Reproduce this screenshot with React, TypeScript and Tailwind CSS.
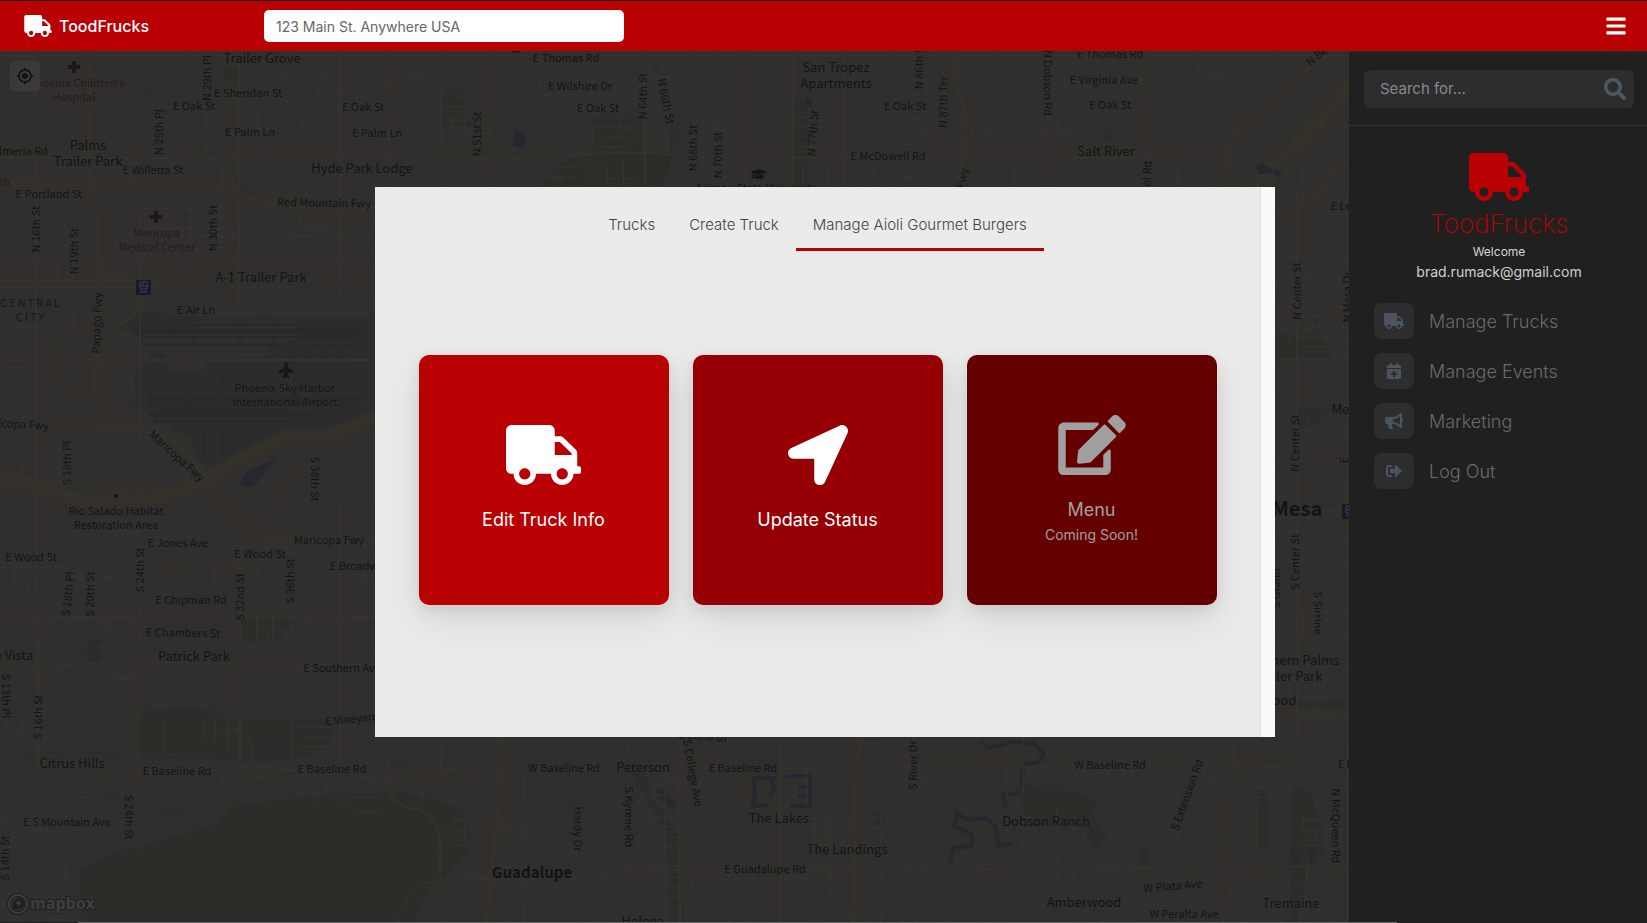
import React from "react";
import {
  FaBars,
  FaBullhorn,
  FaCalendarPlus,
  FaEdit,
  FaGraduationCap,
  FaLocationArrow,
  FaPlane,
  FaSearch,
  FaSignOutAlt,
  FaTruck,
} from "react-icons/fa";
import { MdMyLocation } from "react-icons/md";

type Kind = "road" | "place" | "poi" | "health" | "town" | "city" | "district";
type Label = [string, number, number, number, Kind];

const labelClass: Record<Kind, string> = {
  road: "text-[11px] fill-[#131312]",
  place: "text-[13px] fill-[#131312]",
  poi: "text-[11px] fill-[#131313]",
  health: "text-[11px] fill-[#2b1818]",
  town: "text-[15px] font-bold fill-[#131312]",
  city: "text-[20px] font-bold fill-[#131312]",
  district: "text-[11px] tracking-[2px] fill-[#171615]",
};

// text, centre x, centre y, rotation, kind
const labels: Label[] = [
  ["Trailer Grove", 262, 58, 0, "place"],
  ["Phoenix Children's", 77, 83, 0, "health"],
  ["Hospital", 74, 97, 0, "health"],
  ["N 29th Pl", 207, 78, -90, "road"],
  ["E Sheridan St", 248, 93, 0, "road"],
  ["E Oak St", 194, 106, 0, "road"],
  ["E Oak St", 363, 107, 0, "road"],
  ["N 25th Pl", 159, 132, -90, "road"],
  ["E Palm Ln", 250, 132, 0, "road"],
  ["E Palm Ln", 377, 133, 0, "road"],
  ["Almeria Rd", 20, 151, 0, "road"],
  ["Palms", 88, 145, 0, "place"],
  ["Trailer Park", 88, 161, 0, "place"],
  ["E Willetta St", 153, 170, 0, "road"],
  ["Hyde Park Lodge", 362, 168, 0, "place"],
  ["E Portland St", 49, 194, 0, "road"],
  ["Red Mountain Fwy", 324, 203, 1, "road"],
  ["th", 5, 182, 0, "health"],
  ["N 16th St", 36, 229, -90, "road"],
  ["N 19th St", 74, 251, -90, "road"],
  ["N 30th St", 213, 228, -90, "road"],
  ["Maricopa", 157, 233, 0, "health"],
  ["Medical Center", 157, 247, 0, "health"],
  ["A-1 Trailer Park", 261, 277, 0, "place"],
  ["E Air Ln", 196, 310, 0, "road"],
  ["CENTRAL", 31, 303, 0, "district"],
  ["CITY", 31, 317, 0, "district"],
  ["Papago Fwy", 97, 323, -88, "road"],
  ["Phoenix Sky Harbor", 285, 388, 0, "poi"],
  ["International Airport", 285, 402, 0, "poi"],
  ["Maricopa Fwy", 14, 424, 3, "road"],
  ["Maricopa Fwy", 177, 456, 42, "road"],
  ["S 18th Pl", 67, 463, -90, "road"],
  ["S 38th St", 315, 479, 90, "road"],
  ["Rio Salado Habitat", 116, 511, 0, "poi"],
  ["Restoration Area", 116, 525, 0, "poi"],
  ["E Jones Ave", 178, 543, 0, "road"],
  ["Maricopa Fwy", 329, 540, 0, "road"],
  ["E Wood St", 31, 557, 0, "road"],
  ["E Wood St", 260, 554, 0, "road"],
  ["E Broadway Rd", 368, 566, 0, "road"],
  ["S 24th St", 140, 570, -90, "road"],
  ["S 18th Pl", 68, 594, -84, "road"],
  ["S 20th St", 90, 594, -90, "road"],
  ["S 32nd St", 240, 597, -90, "road"],
  ["S 36th St", 290, 581, -90, "road"],
  ["E Chipman Rd", 191, 600, 0, "road"],
  ["E Chambers St", 183, 633, 1, "road"],
  ["e Vista", 14, 655, 0, "place"],
  ["Patrick Park", 194, 656, 0, "place"],
  ["E Southern Ave", 342, 668, 0, "road"],
  ["S 13th Pl", 6, 696, 90, "road"],
  ["S 16th St", 38, 717, -90, "road"],
  ["Citrus Hills", 72, 763, 0, "place"],
  ["E Baseline Rd", 177, 771, 0, "road"],
  ["E Baseline Rd", 332, 769, 0, "road"],
  ["E Vineyard Rd", 360, 718, -6, "road"],
  ["W Baseline Rd", 564, 768, 0, "road"],
  ["Peterson", 643, 767, 0, "place"],
  ["S Kyrene Rd", 629, 817, 90, "road"],
  ["Hardy Dr", 578, 829, 90, "road"],
  ["E S Mountain Ave", 67, 822, 0, "road"],
  ["S 24th St", 129, 817, 90, "road"],
  ["S 14th St", 5, 858, -90, "road"],
  ["Guadalupe", 532, 873, 0, "town"],
  ["Helena", 643, 921, 0, "place"],
  ["S College Ave", 693, 773, 80, "road"],
  ["E Carla Dr", 703, 736, 4, "road"],
  ["E Baseline Rd", 743, 768, 0, "road"],
  ["S River Dr", 913, 765, -90, "road"],
  ["W Baseline Rd", 1110, 765, 0, "road"],
  ["E Baseline Rd", 1372, 764, 0, "road"],
  ["S Extension Rd", 1187, 795, -70, "road"],
  ["The Lakes", 779, 818, 0, "place"],
  ["Dobson Ranch", 1046, 821, 0, "place"],
  ["The Landings", 847, 849, 0, "place"],
  ["E Guadalupe Rd", 765, 869, 0, "road"],
  ["Amberwood", 1084, 902, 0, "place"],
  ["W Plata Ave", 1173, 886, -5, "road"],
  ["W Peralta Ave", 1184, 914, 0, "road"],
  ["Tremaine", 1291, 903, 0, "place"],
  ["N McQueen Rd", 1336, 826, 90, "road"],
  ["N 48th St", 516, 30, -90, "road"],
  ["E Thomas Rd", 566, 58, 0, "road"],
  ["E Wilshire Dr", 580, 86, 0, "road"],
  ["E Oak St", 598, 108, 0, "road"],
  ["N 64th St", 643, 96, -90, "road"],
  ["N 66th St", 666, 101, 78, "road"],
  ["N 51st St", 477, 134, -90, "road"],
  ["N 68th St", 693, 148, -90, "road"],
  ["N 70th St", 718, 155, -90, "road"],
  ["N 77th St", 813, 133, -86, "road"],
  ["San Tropez", 836, 67, 0, "place"],
  ["Apartments", 836, 83, 0, "place"],
  ["Arizona State University", 756, 188, 0, "poi"],
  ["E McDowell Rd", 888, 156, 0, "road"],
  ["N 86th St", 919, 66, -90, "road"],
  ["N 87th Ter", 943, 102, -90, "road"],
  ["E Oak St", 905, 106, 0, "road"],
  ["N Dobson Rd", 1048, 83, 90, "road"],
  ["E Thomas Rd", 1110, 54, 0, "road"],
  ["E Virginia Ave", 1104, 80, 0, "road"],
  ["E Oak St", 1110, 105, 0, "road"],
  ["Salt River", 1106, 151, 0, "place"],
  ["Price Fwy", 960, 192, -80, "road"],
  ["N Alma School Rd", 1146, 206, -88, "road"],
  ["N Beeline Hwy", 1336, 40, -40, "road"],
  ["E Lehi Rd", 1354, 206, 0, "road"],
  ["N Center St", 1297, 291, -90, "road"],
  ["N Mesa Dr", 1347, 297, -90, "road"],
  ["Mesa", 1347, 409, 0, "place"],
  ["N Center St", 1295, 443, -90, "road"],
  ["E", 1344, 460, -90, "road"],
  ["Mesa", 1297, 509, 0, "city"],
  ["S Center St", 1295, 562, -90, "road"],
  ["S Grand", 1276, 588, -90, "road"],
  ["S Sirrine", 1318, 613, 90, "road"],
  ["Southern Palms", 1291, 660, 0, "place"],
  ["Trailer Park", 1288, 676, 0, "place"],
  ["Dobson Wood", 1254, 700, 0, "place"],
];

// Residential streets, laid out block by block with a fixed seed
function buildStreets(): string {
  let seed = 17;
  const rand = () => {
    seed = (seed * 16807) % 2147483647;
    return seed / 2147483647;
  };
  const parts: string[] = [];
  for (let bx = -10; bx < 1350; bx += 50) {
    for (let by = 57; by < 925; by += 50) {
      const airport = bx > 100 && bx < 380 && by > 290 && by < 500;
      const mountain = bx > 60 && bx < 440 && by > 780;
      if (airport || mountain) continue;
      const density = rand();
      if (density < 0.2) continue;
      const count = 2 + Math.floor(density * 4);
      for (let i = 1; i < count; i++) {
        const offset = Math.round((50 / count) * i);
        const start = Math.round(rand() * 16);
        const end = 50 - Math.round(rand() * 16);
        if (density > 0.55) parts.push(`M${bx + start} ${by + offset}H${bx + end}`);
        else parts.push(`M${bx + offset} ${by + start}V${by + end}`);
        if (rand() > 0.6) parts.push(`M${bx + offset} ${by + 8}v14h12v14`);
      }
    }
  }
  return parts.join("");
}

const streets = buildStreets();
const collectors =
  "M36 51V923M189 51V280M290 51V280M441 51V190M541 51V190M592 51V190M693 51V190M718 51V190M793 51V190M894 51V190M997 51V190M1098 51V130M1098 160V190M1199 51V155M1174 80H1100M1274 51V105M1315 590V740M1280 590V740M190 500V620M214 500V580M291 620V770M139 770V850M524 740V923M594 740V923M665 740V923M730 740V923M831 740V923M881 740V923M983 860V923M1133 740V923M1178 740V923M0 107H391M391 107H760M975 106H1250M973 131H1073M0 182H90M120 236H340M0 519H54M0 592H50M120 568H215M240 505H375M0 822H180M0 872H70M450 780H520M620 818H845M730 844H850M1275 257H1349M1275 359H1349M1275 496H1349M1275 562H1349M1275 612H1349M1275 637H1349";
const arterials =
  "M0 56H1349M0 158H140M140 158H391L520 159Q560 158 595 154T720 158H1234M0 208H375M0 259H375M0 281H375M0 360H375M0 568L215 567L375 568M0 618H375M0 670Q60 664 140 662L235 664H375M0 772L450 769L860 768L1349 764M620 870H860L1349 866M36 160V560L39 640V770M140 210V420L137 500L140 620L138 770M239 51V310M240 590V770M340 51V300M340 500V760M389 51V190M389 737V790Q392 806 420 810M441 740V780M491 51V190M645 51V190M744 51V190M793 51V190M844 51V190M944 51V155M1048 51V190M1149 51V190M1234 740V770Q1228 800 1232 923M1297 190V740M1347 190V923M680 740V923M780 740V923M1275 307H1349M1275 461H1349M1275 511H1349";

function MapCanvas() {
  return (
    <svg className="absolute inset-0 h-full w-full" aria-label="Street map" role="img">
      <g transform="translate(0 -51)">
        <rect width="4000" height="3000" fill="#302f2d" />
        {/* parks and open land */}
        <g fill="#2c2d29">
          <path d="M441 95h24v23h12v8h-36zM592 116h50v38h-50zM565 160q20-8 78-6h30l-6 20-12 20H532zM225 67h14v14h-14zM240 618h59l-25 24h-34zM80 636l8 4h12v24H87v-26zM138 712q50-6 78-1l14 9h105l-5 25-22 12-60 5-60-8H138zM1275 334h39v-16h9v20l10 21h-58zM1297 409h35l-12 12-12 8h-11zM1297 701h52v7h-52z" />
          <path d="M80 872l30-18 110-30 10-18 52-6 48-6 70-2 40 10 24 8 8 30-10 20-30 28-20 35H80z" />
          <path d="M640 760l12 40 28 30 4 93h-12l-6-90-36-60zM1020 780l18 10 40 2 20 10-6 14 16 20-12 14-18-26-30 2-26-14zM1290 784l20 8 10 30 6 30-20 20-8 51h-8V820z" />
          <path d="M1105 130h8v10h-8zM911 110h8v7h-8zM795 100h12v90h-14zM1258 790h10v60h-10zM1140 846h10v20h-10zM874 812h10v14h-10zM184 210h5v24h-5z" />
        </g>
        {/* airport apron and runways */}
        <path
          d="M118 330q20-18 26-18l60 6h50l6-4 10 4h105v98l-30 14-50 4-44 22-26 12-16 0-14-12-4-20-16-6-20-20h-20v-40l14-6v-12h16l4 20h34l4-12 60-4v-14l30 6v-24l-100 2-24 10-18-6-10 8-4-6z"
          fill="#2c2c2d"
        />
        <g fill="none" stroke="#29292b">
          <path d="M133 331H358M148 400H360M148 415H312" strokeWidth="5" />
          <path
            d="M142 325h224v20H142zM142 337h224M150 390h210v15H150zM156 410h134v12H156zM288 340v36M294 340v60M310 345v16M326 345v16M341 345v16M360 325v75M204 428v32M213 428v34M222 426v30M194 325v20M240 325v20M274 325v20M185 392v20M225 374l-8 20"
            strokeWidth="2"
          />
        </g>
        {/* dry river bed */}
        <path
          d="M0 478q30 4 60 16t60 3q50 6 90-20t80-42h40l50-20"
          fill="none"
          stroke="#34302a"
          strokeWidth="13"
        />
        <path d="M1240 196L1349 74V98L1272 180L1256 196z" fill="#34302a" />
        {/* water */}
        <g fill="#25282f">
          <path d="M276 459q-12 16-22 27-10 4-14-2 0-8 12-15zM516 130l11 6-5 13-10-4zM806 97l6 2v8h-7zM805 135l5-6v12h-4zM1254 170l8-7 8 5 13 4-4 5-10-4-10 2zM655 790l8-2 12 16v6l-10-6zM1290 850l10 5-4 8zM1308 850l8 3-6 6z" />
        </g>
        <g fill="none" stroke="#25282f" strokeWidth="4">
          <path d="M776 778h-22q2 14-1 28l16-1M770 780l5 8-6 8M786 776h24v30h-20M798 787h12M798 796h12" />
          <path d="M980 740l8 8 26-6 20 2 10 10-6 8-14 3-4 20-2 8-16 2 4 12M955 812l12 8 18-2 10 8 4 20 12-2M958 812l-4 14 18 8v12l-18 2-4 14" />
        </g>
        <g fill="none" stroke="#292c2e" strokeWidth="1">
          <path d="M110 51L150 98L260 200L280 216L330 256M0 813q60-18 90-18t60 14l40 2 46-10 20-14 20-12 60-6 110-3M0 757q60-6 80-5l60 4 60 3q44 2 70-14t80-24M600 735q40 20 52 60l22 50v78M0 921H1349M330 220L420 300M1349 86L1291 137v14l-20 30" />
          <path d="M648 56q22 24 24 70 0 40-10 50l-6 14" strokeWidth="2" />
        </g>
        {/* streets */}
        <path d={streets} fill="none" stroke="#353430" />
        <path
          d="M296 85l10-5q10 0 12 8v14M318 75q20 0 24 12v30M210 740q30-20 40 0t-10 30M880 790q40-20 80-4t60 40-40 40-70-20M860 742q30 0 50 20M870 880q40-30 80 0v43M1150 800q-30-30-60-10M1110 880q-20-40-60-20M340 800q20 20 40 10M398 923q10-40 30-40t50-30M420 900q30 10 20 23M1300 880q20 10 20 43M1290 880q-10 10-10 43M700 60q10 30 0 50M620 70q-30 0-40 20M860 90q40 40 20 70M930 110q-40 0-50 30M1325 315q-10 20 10 30"
          fill="none"
          stroke="#353430"
        />
        <path d={collectors} fill="none" stroke="#353430" />
        <path d={arterials} fill="none" stroke="#34322b" strokeWidth="2" />
        {/* freeways */}
        <g fill="none" stroke="#33312a" strokeWidth="5">
          <path d="M89 51V160Q88 185 94 200T98 240V340Q94 380 95 400 98 420 120 426L160 434Q190 450 210 484T260 538Q280 542 375 541M0 184H190Q220 185 250 197T340 210H375M0 424H80L140 430M953 51Q953 80 962 100T963 160L958 190M1310 66L1240 130Q1228 140 1226 160L1234 190M1349 160Q1335 166 1326 185T1300 207L1275 211M499 737V800L486 923M853 923L856 770 862 737M1275 714H1349M1349 740V923" />
          <path
            d="M316 464Q296 464 286 486T250 540 240 560M62 350Q64 330 84 328H104Q112 330 112 345V390Q112 412 130 420M62 350V376Q66 398 84 398H108M680 760Q700 740 730 770T742 800M420 810Q444 820 440 860T470 870"
            strokeWidth="3"
          />
          <path d="M0 287H150L165 281H375M137 290V310Q134 318 120 324T112 345" strokeWidth="3" />
        </g>
        {/* labels */}
        <g
          fontFamily="'Noto Sans CJK SC', 'Noto Sans', sans-serif"
          stroke="#32312f"
          strokeWidth="1"
          paintOrder="stroke"
        >
          {labels.map(([text, x, y, angle, kind], i) => (
            <text
              key={i}
              x={x}
              y={y}
              dy="0.36em"
              textAnchor="middle"
              transform={`rotate(${angle} ${x} ${y})`}
              className={labelClass[kind]}
            >
              {text}
            </text>
          ))}
        </g>
        {/* map symbols */}
        <path
          d="M72 61h4v4h4v4h-4v4h-4v-4h-4v-4h4zM154 211h4v4h4v4h-4v4h-4v-4h-4v-4h4z"
          fill="#211515"
        />
        <circle cx="116" cy="496" r="2" fill="#151514" />
        {[
          [136, 280],
          [1342, 504],
        ].map(([x, y]) => (
          <g key={x} transform={`translate(${x} ${y})`}>
            <rect width="15" height="15" fill="#151930" />
            <path d="M4 2h7v7H4zM5 12l1-2M10 12l-1-2M4 12h7" fill="none" stroke="#414143" />
            <path d="M4 6h7M7 2v4" stroke="#414143" />
          </g>
        ))}
        <FaPlane x="279" y="367" width="11" height="11" fill="#171716" transform="rotate(-90 284 373)" />
        <FaGraduationCap x="751" y="166" width="10" height="10" fill="#151514" />
      </g>
    </svg>
  );
}

function MapboxLogo() {
  return (
    <a href="#mapbox" aria-label="Mapbox" className="absolute bottom-[5px] left-[6px]">
      <svg width="100" height="26" viewBox="0 0 100 26">
        <circle cx="12" cy="13" r="9" fill="none" stroke="#1f201e" strokeWidth="4" />
        <circle cx="12" cy="13" r="9" fill="none" stroke="#3f403d" strokeWidth="2" />
        <path d="M7 18q-1-8 3-10 4-2 7 1t0 7q-3 3-10 2z" fill="#1f201e" />
        <path d="M12.500 9l1 2 2 1-2 1-1 2-1-2-2-1 2-1z" fill="#454643" />
        <text
          x="24"
          y="18"
          className="fill-[#3f403d] text-[16px] font-bold"
          fontFamily="'Open Sans', sans-serif"
          stroke="#1f201e"
          strokeWidth="2"
          paintOrder="stroke"
        >
          mapbox
        </text>
      </svg>
    </a>
  );
}

const menu = [
  { label: "Manage Trucks", icon: <FaTruck className="h-4 w-5" /> },
  { label: "Manage Events", icon: <FaCalendarPlus className="size-4" /> },
  { label: "Marketing", icon: <FaBullhorn className="h-4 w-[18px]" /> },
  { label: "Log Out", icon: <FaSignOutAlt className="size-4" /> },
];

const cardBase =
  "flex size-[250px] flex-col items-center justify-center rounded-[10px] shadow-[0_15px_35px_rgba(50,60,70,0.12),0_5px_15px_rgba(0,0,0,0.08)]";

export default function App() {
  return (
    <div className="flex min-h-screen flex-col border-t border-[#222222] bg-[#202020] font-['Inter','Liberation_Sans',sans-serif]">
      <header className="flex h-[50px] items-center bg-[#b90003]">
        <a href="#home" className="flex w-[264px] items-center gap-[7px] pl-6 text-white">
          <FaTruck className="h-[22px] w-7" />
          <span className="text-[16px] font-medium">ToodFrucks</span>
        </a>
        <input
          type="text"
          aria-label="Address"
          placeholder="123 Main St. Anywhere USA"
          className="h-8 w-[360px] rounded-[5px] bg-white px-3 text-[14px] text-[#555555] outline-none placeholder:text-[#666666]"
        />
        <button type="button" aria-label="Toggle menu" className="ml-auto mr-5 text-white">
          <FaBars className="size-[22px]" />
        </button>
      </header>

      <div className="flex flex-1">
        <main className="relative flex-1 overflow-hidden bg-[#302f2d]">
          <MapCanvas />
          <button
            type="button"
            aria-label="Find my location"
            className="absolute left-[10px] top-[10px] flex size-[30px] items-center justify-center rounded-[5px] bg-[#393937] text-[#111111] shadow-[0_0_0_1px_#333331]"
          >
            <MdMyLocation className="size-[18px]" />
          </button>
          <MapboxLogo />
        </main>

        <aside className="w-[298px] border-t border-[#2d2d2d] bg-[#202020]">
          <div className="border-b border-[#333333] pb-[17px] pl-[15px] pr-[13px] pt-[18px]">
            <form className="flex h-[38px] items-center rounded-[6px] bg-[#2d2d2d] pl-4 pr-2">
              <input
                type="search"
                aria-label="Search"
                placeholder="Search for..."
                className="min-w-0 flex-1 bg-transparent text-[15px] text-[#9a9fa6] outline-none placeholder:text-[#858a91]"
              />
              <button type="submit" aria-label="Submit search" className="text-[#4f5862]">
                <FaSearch className="size-[22px]" />
              </button>
            </form>
          </div>
          <div className="flex flex-col items-center pl-[2px] pt-[27px]">
            <FaTruck className="h-12 w-[60px] text-[#b90003]" />
            <div className="mt-[3px] text-[26px] font-extralight leading-10 text-[#b90003]">ToodFrucks</div>
            <div className="text-[12px] leading-4 text-[#d5d5d5]">Welcome</div>
            <div className="mt-[2px] text-[14px] leading-5 text-[#d0d0d0]">brad.rumack@gmail.com</div>
          </div>
          <nav className="mt-[21px] flex flex-col gap-[14px] pl-[25px]">
            {menu.map((item) => (
              <a key={item.label} href="#menu" className="flex items-center gap-[15px]">
                <span className="flex h-9 w-10 items-center justify-center rounded-[8px] bg-[#2d2d2d] text-[#4b545e]">
                  {item.icon}
                </span>
                <span className="text-[18px] font-light text-[#6a6a6a]">{item.label}</span>
              </a>
            ))}
          </nav>
        </aside>
      </div>
      <div className="ml-[78px] mr-[250px] h-px bg-[#6b6b6b]" />

      <div className="fixed inset-0 flex items-center justify-center pl-[3px] pt-px">
        <section
          role="dialog"
          aria-label="Manage truck"
          className="flex min-h-[550px] w-[900px] max-w-full bg-[#ebebeb]"
        >
          <div className="flex flex-1 flex-col">
            <div role="tablist" className="flex justify-center pt-4 text-[15px] font-light text-[#3f454c]">
              <button type="button" role="tab" className="h-12 border-b-3 border-transparent px-[17px]">
                Trucks
              </button>
              <button type="button" role="tab" className="h-12 border-b-3 border-transparent px-[17px]">
                Create Truck
              </button>
              <button
                type="button"
                role="tab"
                aria-selected="true"
                className="h-12 border-b-3 border-[#b90003] px-[17px]"
              >
                Manage Aioli Gourmet Burgers
              </button>
            </div>
            <div className="flex flex-wrap justify-center gap-6 pt-[104px]">
              <button type="button" className={`${cardBase} bg-[#b90003] text-white`}>
                <FaTruck className="h-[60px] w-[75px]" />
                <span className="mt-5 text-[18px] leading-[30px]">Edit Truck Info</span>
              </button>
              <button type="button" className={`${cardBase} bg-[#960004] text-white`}>
                <FaLocationArrow className="size-[60px]" />
                <span className="mt-5 text-[18px] leading-[30px]">Update Status</span>
              </button>
              <button type="button" disabled className={`${cardBase} bg-[#640000] text-[#a0a0a0]`}>
                <FaEdit className="h-[60px] w-[68px]" />
                <span className="mt-5 text-[18px] leading-[30px]">Menu</span>
                <span className="text-[14px] leading-5">Coming Soon!</span>
              </button>
            </div>
          </div>
          <div className="w-[15px] border-l border-[#e0e0e0] bg-[#fafafa]" />
        </section>
      </div>
    </div>
  );
}
